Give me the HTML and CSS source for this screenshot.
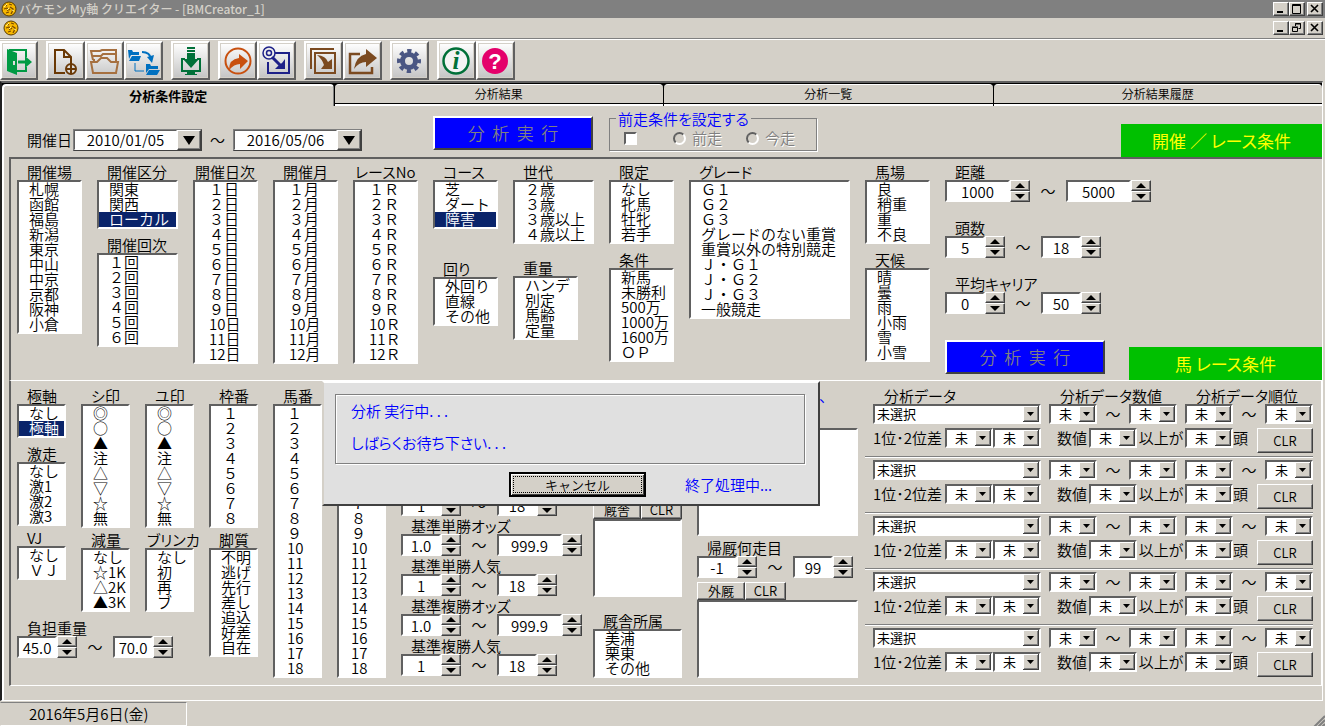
FILE: index.html
```html
<!DOCTYPE html>
<html lang="ja">
<head>
    <meta charset="UTF-8">
    <meta name="viewport" content="width=device-width, initial-scale=1.0">
    <title>バケモン My軸 クリエイター</title>
    <link rel="stylesheet" href="styles.css">
</head>
<body>

<svg class="defs" aria-hidden="true">
    <symbol id="coin" viewBox="0 0 16 16">
        <circle cx="8" cy="8" r="7" fill="#f8b800" stroke="#5a3c00"/>
        <path d="M4 4l2 1M8 3l3 1M3 8l3-1 1 3M9 6l3 2-1 3M5 12l3-1M10 13l1-2M8 8l1 1" stroke="#7a4a00" stroke-width="1.3" fill="none"/>
        <path d="M3 6l3-3M6 9l2-2M11 9l2 1" stroke="#fff080" fill="none"/>
    </symbol>
</svg>

<header class="titlebar">
    <svg class="coin"><use href="#coin"/></svg>
    <h1>バケモン My軸 クリエイター - [BMCreator_1]</h1>
    <div class="window-buttons">
        <button type="button" aria-label="最小化"><svg viewBox="0 0 12 10"><path d="M2 8h6" stroke="#000" stroke-width="2"/></svg></button>
        <button type="button" aria-label="最大化"><svg viewBox="0 0 12 10"><path d="M2 1h8M2 0h8v9H2z" transform="translate(-.5 .5)" stroke="#000" fill="none"/></svg></button>
        <button type="button" class="close" aria-label="閉じる"><svg viewBox="0 0 12 10"><path d="M2 1l7 7M9 1L2 8" stroke="#000" stroke-width="1.6"/></svg></button>
    </div>
</header>

<div class="menubar">
    <svg class="coin"><use href="#coin"/></svg>
    <div class="window-buttons">
        <button type="button" aria-label="子ウィンドウ最小化"><svg viewBox="0 0 12 10"><path d="M2 8h6" stroke="#000" stroke-width="2"/></svg></button>
        <button type="button" aria-label="元に戻す"><svg viewBox="0 0 12 10"><path d="M4.500 3V.5h5v5H7.500M4 1h6M1.500 4.500h5v4h-5zM1 4h6" stroke="#000" fill="none"/></svg></button>
        <button type="button" class="close" aria-label="子ウィンドウを閉じる"><svg viewBox="0 0 12 10"><path d="M2 1l7 7M9 1L2 8" stroke="#000" stroke-width="1.6"/></svg></button>
    </div>
</div>

<nav class="toolbar">
    <div class="tools">
        <button type="button" aria-label="終了">
            <svg viewBox="0 0 32 32"><path fill="#009a44" fill-rule="evenodd" d="M4 4l10 4v22L4 26zM10 16v4h2v-4z"/><path d="M6 5h17v7M14 26h9v-4" fill="none" stroke="#009a44" stroke-width="2"/><path d="M15 17h9" stroke="#009a44" stroke-width="3"/><path d="M22 11l7 6-7 6z" fill="#009a44"/></svg>
        </button>
    </div>
    <div class="tools">
        <button type="button" aria-label="新規">
            <svg viewBox="0 0 32 32"><path d="M15 28H5V5h9l7 7v7M14 5v7h7" fill="none" stroke="#6a3906" stroke-width="2"/><circle cx="21" cy="24" r="5" fill="#ddd" stroke="#6a3906" stroke-width="2"/><path d="M21 20v8M17 24h8" stroke="#6a3906" stroke-width="2"/></svg>
        </button>
        <button type="button" aria-label="開く">
            <svg viewBox="0 0 32 32"><path d="M4 15L2 6h9l2-1h14v4H14l-2 2H4M5 14v3M27 8v8" fill="none" stroke="#a67040" stroke-width="2"/><path d="M2 17h6l4-4h6l4 4h7l-2 11H4z" fill="none" stroke="#a67040" stroke-width="2"/></svg>
        </button>
        <button type="button" aria-label="コピー">
            <svg viewBox="0 0 32 32"><path fill="#0070c0" d="M0 5h4l1 2h6v3H3l-2 4zM4 11h9l-2 5H1zM18 19h4l1 2h7v3H21l-3 4zM21 25h11l-3 5H18z"/><path d="M14 7q8 0 9 7" fill="none" stroke="#0070c0" stroke-width="2"/><path d="M19 12l5 6 2-8z" fill="#0070c0"/><path d="M7 18v8h9" fill="none" stroke="#0070c0"/></svg>
        </button>
    </div>
    <div class="tools">
        <button type="button" aria-label="ダウンロード">
            <svg viewBox="0 0 32 32"><path d="M12 3h8M12 6h8" stroke="#007038" stroke-width="2"/><path d="M12 8h8v6h4l-8 9-8-9h4z" fill="#007038"/><path d="M10 14H7v12h18V14h-3" fill="none" stroke="#007038" stroke-width="2"/><path d="M6 25h20v2h-6v2h2v1H10v-1h2v-2H6z" fill="#007038"/></svg>
        </button>
    </div>
    <div class="tools">
        <button type="button" aria-label="実行">
            <svg viewBox="0 0 32 32"><circle cx="16" cy="16" r="12.500" fill="none" stroke="#c8500f" stroke-width="2"/><path d="M7 25q0-11 10-12V9l9 7-8 8v-5q-6 0-11 6z" fill="#c8500f"/></svg>
        </button>
        <button type="button" aria-label="対象設定">
            <svg viewBox="0 0 32 32"><path d="M14 8h14v20H7V17" fill="none" stroke="#1d2088" stroke-width="2"/><circle cx="8" cy="8" r="6" fill="#eee" stroke="#1d2088" stroke-width="1.500"/><circle cx="8" cy="8" r="2.500" fill="none" stroke="#1d2088" stroke-width="1.500"/><path d="M11 12l9 9" stroke="#1d2088" stroke-width="3"/><path d="M24 14v10H14l4-4 3-2z" fill="#1d2088"/></svg>
        </button>
    </div>
    <div class="tools">
        <button type="button" aria-label="取込">
            <svg viewBox="0 0 32 32"><path d="M3 24V4h23M7 8h20v20H7z" fill="none" stroke="#7b4a20" stroke-width="2"/><path d="M9 10q9 1 11 7l4-3v10H13l3-4Q14 14 9 10z" fill="#7b4a20"/></svg>
        </button>
        <button type="button" aria-label="書出">
            <svg viewBox="0 0 32 32"><path d="M13 9H3v19h22v-6" fill="none" stroke="#7b4a20" stroke-width="2.500"/><path d="M7 24Q9 11 19 9V4l11 9-11 9v-5Q12 17 7 24z" fill="#7b4a20"/></svg>
        </button>
    </div>
    <div class="tools">
        <button type="button" aria-label="設定">
            <svg viewBox="0 0 32 32"><circle cx="15" cy="16" r="6.500" fill="none" stroke="#4a5683" stroke-width="5"/><circle cx="15" cy="16" r="10" fill="none" stroke="#4a5683" stroke-width="4" stroke-dasharray="4.200 3.654" stroke-dashoffset="2.100"/></svg>
        </button>
    </div>
    <div class="tools">
        <button type="button" aria-label="情報">
            <svg viewBox="0 0 32 32"><circle cx="15" cy="16" r="12.500" fill="#f4f4f4" stroke="#007038" stroke-width="2.500"/><text x="15" y="24" class="glyph info">i</text></svg>
        </button>
        <button type="button" aria-label="ヘルプ">
            <svg viewBox="0 0 32 32"><circle cx="15" cy="16" r="13" fill="#e4006b"/><text x="15" y="24" class="glyph help">?</text></svg>
        </button>
    </div>
</nav>

<main class="tab-control">
    <div class="tabs" role="tablist">
        <button type="button" role="tab" class="active" aria-selected="true">分析条件設定</button>
        <button type="button" role="tab">分析結果</button>
        <button type="button" role="tab">分析一覧</button>
        <button type="button" role="tab">分析結果履歴</button>
    </div>

    <div class="page">
        <div class="top-row">
            <div class="dates">
                <label for="dateFrom">開催日</label>
                <span class="date"><input type="text" id="dateFrom" value="2010/01/05"><button type="button" aria-label="開始日を選択"><i class="down"></i></button></span>
                <span class="tilde">～</span>
                <span class="date"><input type="text" id="dateTo" aria-label="終了日" value="2016/05/06"><button type="button" aria-label="終了日を選択"><i class="down"></i></button></span>
            </div>
            <button type="button" class="run" disabled>分&nbsp; 析&nbsp; 実&nbsp; 行</button>
            <fieldset class="previous">
                <legend>前走条件を設定する</legend>
                <input type="checkbox" id="usePrevious" aria-label="前走条件を設定する">
                <label><input type="radio" name="previous" disabled>前走</label>
                <label><input type="radio" name="previous" disabled>今走</label>
            </fieldset>
            <h2 class="banner banner-race">開催 ／ レース条件</h2>
        </div>

        <section class="race">
            <div class="race-grid">
                <div class="col">
                    <label for="place">開催場</label>
                    <select id="place" multiple data-items="札幌,函館,福島,新潟,東京,中山,中京,京都,阪神,小倉"></select>
                </div>
                <div class="col">
                    <label for="area">開催区分</label>
                    <select id="area" multiple data-items="関東,関西,ローカル" data-selected="ローカル"></select>
                    <label for="kai" class="gap-s">開催回次</label>
                    <select id="kai" multiple data-items="１回,２回,３回,４回,５回,６回"></select>
                </div>
                <div class="col">
                    <label for="day" class="wide">開催日次</label>
                    <select id="day" multiple data-count="12" data-unit="日"></select>
                </div>
                <div class="col">
                    <label for="month">開催月</label>
                    <select id="month" multiple data-count="12" data-unit="月"></select>
                </div>
                <div class="col">
                    <label for="raceNo" class="wide">レースNo</label>
                    <select id="raceNo" multiple data-count="12" data-unit="Ｒ"></select>
                </div>
                <div class="col">
                    <label for="course">コース</label>
                    <select id="course" multiple data-items="芝,ダート,障害" data-selected="障害"></select>
                    <label for="turn" class="gap-l">回り</label>
                    <select id="turn" multiple data-items="外回り,直線,その他"></select>
                </div>
                <div class="col">
                    <label for="age">世代</label>
                    <select id="age" multiple data-items="２歳,３歳,３歳以上,４歳以上"></select>
                    <label for="weight" class="gap-m">重量</label>
                    <select id="weight" class="narrow" multiple data-items="ハンデ,別定,馬齢,定量"></select>
                </div>
                <div class="col">
                    <label for="limit">限定</label>
                    <select id="limit" multiple data-items="なし,牝馬,牡牝,若手"></select>
                    <label for="klass" class="gap-s">条件</label>
                    <select id="klass" multiple data-items="新馬,未勝利,500万,1000万,1600万,ＯＰ"></select>
                </div>
                <div class="col">
                    <label for="grade">グレード</label>
                    <select id="grade" multiple data-items="Ｇ１,Ｇ２,Ｇ３,グレードのない重賞,重賞以外の特別競走,Ｊ・Ｇ１,Ｊ・Ｇ２,Ｊ・Ｇ３,一般競走"></select>
                </div>
                <div class="col">
                    <label for="going">馬場</label>
                    <select id="going" multiple data-items="良,稍重,重,不良"></select>
                    <label for="weather" class="gap-s">天候</label>
                    <select id="weather" multiple data-items="晴,曇,雨,小雨,雪,小雪"></select>
                </div>
                <div class="col numbers">
                    <label for="distanceMin">距離</label>
                    <div class="range" data-id="distance" data-min="1000" data-max="5000" data-wide="both"></div>
                    <label for="runnersMin">頭数</label>
                    <div class="range" data-id="runners" data-min="5" data-max="18"></div>
                    <label for="careerMin">平均キャリア</label>
                    <div class="range" data-id="career" data-min="0" data-max="50"></div>
                    <button type="button" class="run" disabled>分&nbsp; 析&nbsp; 実&nbsp; 行</button>
                </div>
            </div>
            <h2 class="banner banner-horse">馬 レース条件</h2>
        </section>

        <section class="horse">
            <div class="marks">
                <div class="marks-cols">
                    <div class="col">
                        <label for="axis">極軸</label>
                        <select id="axis" multiple data-items="なし,極軸" data-selected="極軸"></select>
                        <label for="gekiso" class="gap-s">激走</label>
                        <select id="gekiso" multiple data-items="なし,激1,激2,激3"></select>
                        <label for="vj" class="gap-xs">VJ</label>
                        <select id="vj" multiple data-items="なし,ＶＪ"></select>
                    </div>
                    <div class="col">
                        <label for="shi">シ印</label>
                        <select id="shi" multiple data-items="◎,○,▲,注,△,▽,☆,無"></select>
                        <label for="reduce" class="gap-xs">減量</label>
                        <select id="reduce" multiple data-items="なし,☆1K,△2K,▲3K"></select>
                    </div>
                    <div class="col">
                        <label for="yu">ユ印</label>
                        <select id="yu" multiple data-items="◎,○,▲,注,△,▽,☆,無"></select>
                        <label for="blinker" class="gap-xs wide">ブリンカ</label>
                        <select id="blinker" multiple data-items="なし,初,再,ブ"></select>
                    </div>
                </div>
                <div class="col">
                    <label for="burdenMin" class="gap-s">負担重量</label>
                    <div class="range" data-id="burden" data-min="45.0" data-max="70.0"></div>
                </div>
            </div>
            <div class="col list-col">
                <label for="frame">枠番</label>
                <select id="frame" multiple data-count="8"></select>
                <label for="style" class="gap-xs">脚質</label>
                <select id="style" multiple data-items="不明,逃げ,先行,差し,追込,好差,自在"></select>
            </div>
            <div class="col list-col">
                <label for="horseNo">馬番</label>
                <select id="horseNo" multiple data-count="18"></select>
            </div>
            <div class="col list-col">
                <select id="rank" class="unlabeled" aria-label="人気" multiple data-count="18"></select>
            </div>
            <div class="col odds">
                <div class="range" data-id="popular" data-name="人気" data-min="1" data-max="18"></div>
                <label for="winOddsMin">基準単勝オッズ</label>
                <div class="range" data-id="winOdds" data-min="1.0" data-max="999.9" data-wide="max"></div>
                <label for="winRankMin">基準単勝人気</label>
                <div class="range" data-id="winRank" data-min="1" data-max="18"></div>
                <label for="placeOddsMin">基準複勝オッズ</label>
                <div class="range" data-id="placeOdds" data-min="1.0" data-max="999.9" data-wide="max"></div>
                <label for="placeRankMin">基準複勝人気</label>
                <div class="range" data-id="placeRank" data-min="1" data-max="18"></div>
            </div>
            <div class="col stable">
                <div class="pick"><button type="button">厩舎</button><button type="button">CLR</button></div>
                <select class="box" multiple aria-label="厩舎"></select>
                <label for="belong" class="gap-m">厩舎所属</label>
                <select id="belong" multiple data-items="美浦,栗東,その他"></select>
            </div>
            <div class="col farm">
                <p class="hint">、</p>
                <select class="box tall" multiple aria-label="選択一覧"></select>
                <label for="returnMin" class="gap-xs">帰厩何走目</label>
                <div class="range" data-id="return" data-min="-1" data-max="99"></div>
                <div class="pick"><button type="button">外厩</button><button type="button">CLR</button></div>
                <select class="box" multiple aria-label="外厩"></select>
            </div>
            <div class="analysis">
                <div class="analysis-head">
                    <span>分析データ</span><span>分析データ数値</span><span>分析データ順位</span>
                </div>
                <div id="analysisRows"></div>
            </div>

            <div class="dialog" role="dialog" aria-label="分析 実行中">
                <div class="message">
                    <p>分析 実行中. . .</p>
                    <p>しばらくお待ち下さい. . .</p>
                </div>
                <div class="dialog-foot">
                    <button type="button" class="cancel"><span>キャンセル</span></button>
                    <p>終了処理中...</p>
                </div>
            </div>
        </section>
    </div>
</main>

<footer class="statusbar">
    <span class="today">2016年5月6日(金)</span>
    <svg class="grip" viewBox="0 0 12 12"><path d="M1 12L12 1M5 12l7-7M9 12l3-3" stroke="#808080" stroke-width="2"/></svg>
</footer>

<script>
    const toFull = n => n < 10 ? String.fromCharCode(0xFF10 + n) : String(n);

    // リストボックス
    document.querySelectorAll('select[data-items], select[data-count]').forEach(list => {
        const count = Number(list.dataset.count || 0);
        const items = list.dataset.items
            ? list.dataset.items.split(',')
            : Array.from({ length: count }, (_, i) => toFull(i + 1) + (list.dataset.unit || ''));
        list.size = items.length;
        if (count) list.classList.add('numbered');
        items.forEach(text => {
            const option = new Option(text, text);
            if (text === list.dataset.selected) {
                option.defaultSelected = true;
                option.selected = true;
            }
            list.add(option);
        });
    });

    function spin(id, value, name, wide) {
        return `<span class="spin"><input type="text" id="${id}" class="${wide ? 'wide-input' : ''}" aria-label="${name}" value="${value}">
            <span class="arrows"><button type="button" aria-label="増やす"><i class="up"></i></button><button type="button" aria-label="減らす"><i class="down"></i></button></span></span>`;
    }

    // 範囲入力
    document.querySelectorAll('.range').forEach(range => {
        const { id, min, max, wide } = range.dataset;
        const name = range.dataset.name || document.querySelector(`label[for="${id}Min"]`).textContent;
        range.innerHTML = spin(id + 'Min', min, name + ' 下限', wide === 'both')
            + '<span class="tilde">～</span>'
            + spin(id + 'Max', max, name + ' 上限', Boolean(wide));
    });

    // 分析データ 5行
    const combo = name => `<select class="combo" aria-label="${name}"><option>未</option></select>`;
    document.getElementById('analysisRows').innerHTML = [1, 2, 3, 4, 5].map(n => `
        <div class="analysis-row">
            <div class="line">
                <select class="combo combo-data" aria-label="分析データ${n}"><option>未選択</option></select>
                ${combo('数値 下限')}<span class="tilde">～</span>${combo('数値 上限')}
                <span class="spacer"></span>
                ${combo('順位 下限')}<span class="tilde">～</span>${combo('順位 上限')}
            </div>
            <div class="line">
                <span class="diff">1位･2位差</span>${combo('差 下限')}${combo('差 上限')}
                <span class="value">数値</span>${combo('数値')}<span class="over">以上が</span>${combo('頭数')}<span class="head">頭</span>
                <button type="button" class="clear">CLR</button>
            </div>
        </div>`).join('');

    document.querySelectorAll('.arrows button').forEach(button => {
        button.addEventListener('click', () => {
            const input = button.closest('.spin').querySelector('input');
            const decimals = (input.value.split('.')[1] || '').length;
            const step = (button.querySelector('.up') ? 1 : -1) / 10 ** decimals;
            input.value = (parseFloat(input.value) + step).toFixed(decimals);
        });
    });
</script>

</body>
</html>
```

FILE: styles.css
```css
* {
    box-sizing: border-box;
}

body {
    margin: 0;
    min-height: 100vh;
    display: flex;
    flex-direction: column;
    background: #d4d0c8;
    color: #000;
    font-family: "Noto Sans CJK JP", sans-serif;
    font-size: 15px;
    line-height: 16px;
    font-weight: 350;
}

h1, h2, p {
    margin: 0;
    font-weight: inherit;
}

button, input, select, option {
    font: inherit;
    color: inherit;
    margin: 0;
    padding: 0;
    border-radius: 0;
}

label, legend, .banner, .analysis-head, .message, .line span {
    font-feature-settings: "palt";
}

button {
    background: #d4d0c8;
    border: 1px solid;
    border-color: #fff #404040 #404040 #fff;
    box-shadow: inset -1px -1px #808080;
    display: flex;
    align-items: center;
    justify-content: center;
}

input[type="text"] {
    background: #fff;
    border: 2px solid;
    border-color: #606060 #fff #fff #606060;
    text-align: center;
    min-width: 0;
}

.defs {
    position: absolute;
    width: 0;
    height: 0;
}

/* タイトルバー */
.titlebar, .menubar {
    display: flex;
    align-items: center;
    height: 18px;
    padding: 0 2px 0 1px;
}

.titlebar {
    background: #808080;
    color: #d4d0c8;
}

.titlebar h1 {
    font-size: 12px;
    font-weight: 500;
    padding-left: 2px;
}

.menubar {
    height: 20px;
    padding-left: 3px;
}

.coin {
    width: 16px;
    height: 16px;
}

.window-buttons {
    display: flex;
    margin-left: auto;
}

.window-buttons button {
    width: 16px;
    height: 14px;
}

.window-buttons .close {
    margin-left: 2px;
}

.window-buttons svg {
    width: 12px;
    height: 10px;
}

/* ツールバー */
.toolbar {
    display: flex;
    gap: 8px;
    padding: 2px 0 1px;
    border-top: 1px solid #808080;
    box-shadow: inset 0 1px #fff;
}

.tools {
    display: flex;
}

.tools button {
    width: 39px;
    height: 39px;
    border-width: 2px;
    border-color: #fff #606060 #606060 #fff;
    background: linear-gradient(#fff, #c4c4c4);
    box-shadow: inset 0 0 0 1px #d4d0c8;
}

.tools:first-child button {
    width: 38px;
}

.tools svg {
    width: 32px;
    height: 32px;
    flex: none;
}

.glyph {
    text-anchor: middle;
    font-weight: 700;
}

.info {
    font-family: "Liberation Serif", serif;
    font-style: italic;
    font-size: 25px;
    fill: #007038;
}

.help {
    font-family: "Liberation Sans", sans-serif;
    font-size: 22px;
    fill: #fff;
}

/* タブ */
.tab-control {
    flex: 1;
    margin-right: 2px;
    border-left: 2px solid #202020;
    border-top: 2px solid #606060;
    border-right: 1px solid #fff;
    border-bottom: 1px solid #fff;
}

.tabs {
    display: flex;
    height: 23px;
    background: #000;
}

.tabs button {
    flex: 1;
    margin: 1px 0 3px 1px;
    border: 0;
    border-top: 1px solid #fff;
    border-radius: 4px 4px 0 0;
    font-size: 12px;
    box-shadow: 0 1px #000, 0 3px #fff;
}

.tabs .active {
    margin: 1px 0 0;
    border-top: 2px solid #fff;
    border-left: 2px solid #fff;
    border-right: 1px solid #808080;
    box-shadow: none;
    font-size: 13px;
    font-weight: 700;
}

.page {
    border-left: 2px solid #fff;
    padding: 0 0 14px 5px;
}

.top-row {
    display: flex;
    align-items: flex-end;
    height: 51px;
}

.dates {
    display: flex;
    align-items: center;
    width: 424px;
    padding-left: 18px;
    margin-bottom: 6px;
}

.dates label {
    width: 46px;
}

.date {
    display: flex;
    width: 129px;
    height: 22px;
    border: 1px solid;
    border-color: #808080 #404040 #404040 #808080;
}

.date input {
    flex: 1;
    border-width: 1px;
}

.date button {
    width: 24px;
}

.dates .tilde {
    width: 31px;
}

.tilde {
    text-align: center;
    flex: none;
}

i.up, i.down {
    border: 4px solid transparent;
    flex: none;
}

i.up {
    border-top: 0;
    border-bottom: 5px solid #000;
}

i.down {
    border-bottom: 0;
    border-top: 5px solid #000;
}

.arrows i.up, .arrows i.down {
    border-left-width: 5px;
    border-right-width: 5px;
}

.date i.down {
    border-width: 9px 6px 0;
}

.run {
    width: 160px;
    height: 34px;
    background: #00f;
    color: #808080;
    font-size: 17px;
    border-width: 2px;
    border-color: #fff #404040 #404040 #fff;
    box-shadow: none;
}

.top-row .run {
    margin-bottom: 7px;
}

.previous {
    display: flex;
    align-items: center;
    width: 208px;
    height: 40px;
    margin: 0 0 6px 16px;
    padding: 0 0 0 14px;
    border: 1px solid #808080;
    box-shadow: 1px 1px #fff;
}

.previous legend {
    margin-left: -8px;
    padding: 0 2px;
    color: #00f;
    line-height: 15px;
}

.previous label {
    display: flex;
    align-items: center;
    gap: 6px;
    color: #808080;
    text-shadow: 1px 1px #fff;
    margin-left: 24px;
}

.previous > input {
    margin-right: 12px;
}

.previous input {
    appearance: none;
    width: 13px;
    height: 13px;
    background: #fff;
    border: 2px solid;
    border-color: #606060 #fff #fff #606060;
}

.previous input[type="radio"] {
    border-radius: 50%;
    background: #d4d0c8;
}

.banner {
    display: flex;
    flex: none;
    align-items: center;
    justify-content: center;
    height: 33px;
    background: #00c000;
    color: #ff0;
    font-size: 17px;
    font-weight: 400;
}

.banner-race {
    width: 201px;
    margin-left: auto;
}

.banner-horse {
    width: 193px;
    align-self: flex-end;
}

/* 条件パネル */
.race, .horse {
    display: flex;
    position: relative;
    border-left: 2px solid #606060;
    border-right: 1px solid #fff;
    border-bottom: 1px solid #fff;
    padding-left: 6px;
}

.race {
    border-top: 2px solid #606060;
    border-right: 0;
}

.race-grid {
    flex: 1;
    min-width: 0;
    display: grid;
    grid-template-columns: 80px 96px 80px 80px 80px 80px 96px 80px 176px 80px minmax(0, 1fr);
    padding: 5px 0 6px;
}

.col {
    display: flex;
    flex-direction: column;
}

.col > label {
    height: 16px;
    padding-left: 10px;
    white-space: nowrap;
}

.col > .wide {
    padding-left: 2px;
}

.col > .gap-xs {
    margin-top: 4px;
}

.col > .gap-s {
    margin-top: 8px;
}

.col > .gap-m, .col > .unlabeled {
    margin-top: 16px;
}

.col > .gap-l {
    margin-top: 32px;
}

select[multiple] {
    width: calc(100% - 15px);
    background: #fff;
    border: 2px solid;
    border-color: #606060 #fff #fff #606060;
    overflow: hidden;
}

select.narrow {
    width: 65px;
}

select[multiple] option {
    display: flex;
    align-items: center;
    min-height: 0;
    height: 15px;
    line-height: 15px;
    padding: 0 0 2px 10px;
}

select.numbered option {
    padding-left: 14px;
}

option:checked {
    background: linear-gradient(#0a246a, #0a246a);
    -webkit-text-fill-color: #fff;
}

.range {
    display: flex;
    align-items: center;
}

.range .tilde {
    width: 36px;
}

.spin {
    display: flex;
    height: 22px;
}

.spin input {
    width: 40px;
    height: 22px;
}

.spin .wide-input {
    width: 65px;
}

.arrows {
    display: flex;
    flex-direction: column;
}

.arrows button {
    width: 20px;
    height: 11px;
}

.numbers .range {
    margin-bottom: 18px;
}

.numbers .run {
    margin-top: 8px;
}

/* 馬レース条件 */
.horse {
    padding: 7px 0 7px 6px;
}

.marks {
    width: 192px;
}

.marks-cols {
    display: grid;
    grid-template-columns: repeat(3, 64px);
}

.list-col {
    width: 64px;
}

.horse .list-col select.numbered option {
    padding-left: 12px;
}

.odds {
    width: 192px;
    justify-content: flex-end;
}

.odds .range {
    margin-bottom: 2px;
}

.stable {
    width: 104px;
    justify-content: flex-end;
}

.farm {
    width: 168px;
    justify-content: flex-end;
}

.farm .box {
    width: 161px;
}

.box {
    height: 78px;
}

.box.tall {
    height: 108px;
}

.hint {
    color: #00f;
    flex: 1;
    text-align: right;
    padding-right: 31px;
}

.pick {
    display: flex;
    margin-top: 4px;
}

.pick button {
    width: 48px;
    height: 18px;
    font-size: 13px;
}

.pick button + button {
    width: 41px;
}

.analysis {
    flex: none;
    width: 448px;
    margin-right: auto;
}

.analysis-head {
    display: grid;
    grid-template-columns: 176px 136px auto;
    padding-left: 19px;
    white-space: nowrap;
}

.analysis-row {
    padding-left: 8px;
    height: 53px;
    margin-bottom: 3px;
    border-bottom: 1px solid #808080;
    box-shadow: 0 1px #fff;
}

.analysis-row:last-child {
    height: auto;
    margin-bottom: 0;
    border-bottom: 0;
    box-shadow: none;
}

.line {
    display: flex;
    align-items: center;
    height: 20px;
    margin-bottom: 4px;
    white-space: nowrap;
}

.line + .line {
    height: 25px;
    margin-bottom: 0;
    align-items: flex-start;
    line-height: 20px;
}

.line .tilde {
    width: 32px;
}

.combo {
    appearance: none;
    flex: none;
    width: 48px;
    height: 20px;
    padding: 0 0 0 8px;
    border: 2px solid;
    border-color: #606060 #fff #fff #606060;
    font-size: 13px;
    font-weight: 400;
    line-height: 16px;
    background: #fff url("data:image/svg+xml,%3Csvg xmlns='http://www.w3.org/2000/svg' width='16' height='16'%3E%3Cpath fill='%23404040' d='M0 0h16v16H0z'/%3E%3Cpath fill='%23fff' d='M0 0h15v15H0z'/%3E%3Cpath fill='%23808080' d='M1 1h14v14H1z'/%3E%3Cpath fill='%23d4d0c8' d='M1 1h13v13H1z'/%3E%3Cpath d='M4 6h7l-3.500 4z'/%3E%3C/svg%3E") right center no-repeat;
}

.combo-data {
    width: 168px;
    padding-left: 2px;
    margin-right: 8px;
}

.spacer {
    width: 8px;
}

.diff {
    flex: none;
    width: 72px;
}

.value, .over {
    flex: none;
    width: 48px;
    text-align: center;
}

.value {
    padding-left: 16px;
    text-align: left;
}

.head {
    width: 24px;
}

.clear {
    width: 57px;
    height: 25px;
    font-size: 13px;
}

/* 実行中ダイアログ */
.dialog {
    position: absolute;
    left: 311px;
    top: 0;
    width: 498px;
    padding: 11px 13px 7px 11px;
    background: #e0e0e0;
    border: 2px solid;
    border-color: #fff #404040 #404040 #d4d0c8;
    color: #00f;
}

.message {
    display: flex;
    flex-direction: column;
    gap: 16px;
    height: 70px;
    padding: 8px 15px;
    border: 1px solid #808080;
    box-shadow: 1px 1px #fff, inset 1px 1px #fff;
}

.dialog-foot {
    display: flex;
    align-items: center;
    gap: 39px;
    margin-top: 8px;
    padding-left: 174px;
}

.cancel {
    width: 137px;
    height: 25px;
    padding: 1px;
    border: 2px solid #000;
    box-shadow: inset 1px 1px #fff, inset -1px -1px #404040;
    color: #000;
    font-size: 13px;
}

.cancel span {
    flex: 1;
    margin: 1px;
    border: 1px dotted #000;
    line-height: 15px;
}

/* ステータスバー */
.statusbar {
    display: flex;
    align-items: center;
    justify-content: space-between;
    height: 26px;
}

.today {
    width: 187px;
    padding: 3px 0 3px 28px;
    border: 1px solid;
    border-color: #808080 #fff #fff #d4d0c8;
}

.grip {
    width: 12px;
    height: 12px;
    align-self: flex-end;
}
```
